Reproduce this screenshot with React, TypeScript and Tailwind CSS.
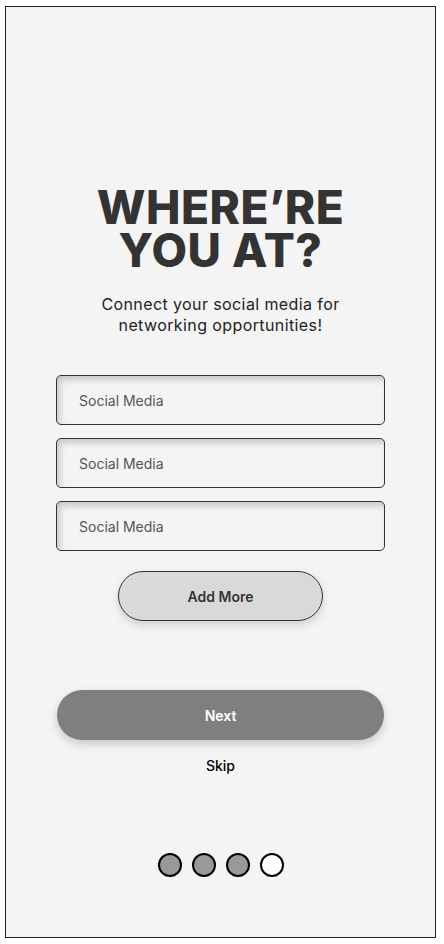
import React from "react";

const font = { fontFamily: "Inter, 'Noto Sans', sans-serif" };

export default function App() {
  return (
    <div className="min-h-screen bg-white pt-[6px] pl-[5px]" style={font}>
      <div className="w-[431px] h-[932px] border border-[#222] bg-[#f4f4f4] flex flex-col items-center">
        <h1 className="mt-[179px] text-[46px] leading-[43px] font-extrabold text-[#333] text-center tracking-[0.5px]">
          WHERE’RE
          <br />
          YOU AT?
        </h1>
        <p className="mt-[22px] text-[16px] leading-[21px] text-[#222] text-center tracking-[0.4px]">
          Connect your social media for
          <br />
          networking opportunities!
        </p>
        <div className="mt-[39px] flex flex-col gap-[13px]">
          {[0, 1, 2].map((i) => (
            <div
              key={i}
              className="w-[329px] h-[50px] rounded-[5px] border border-[#333] bg-[#f4f4f4] shadow-[inset_3px_4px_6px_rgba(0,0,0,0.18)] flex items-center pl-[22px] text-[14px] text-[#555]"
            >
              Social Media
            </div>
          ))}
        </div>
        <button className="mt-[20px] w-[205px] h-[50px] rounded-full border border-[#333] bg-[#d9d9d9] shadow-[0_4px_8px_rgba(0,0,0,0.15)] text-[14px] font-semibold text-[#333]">
          Add More
        </button>
        <button className="mt-[69px] w-[327px] h-[50px] rounded-full bg-[#7f7f7f] shadow-[0_4px_10px_rgba(0,0,0,0.18)] text-[14px] font-semibold text-white">
          Next
        </button>
        <div className="mt-[15px] text-[14px] text-black font-medium">Skip</div>
        <div className="mt-[77px] flex gap-[10px]">
          <span className="w-[24px] h-[24px] rounded-full border-2 border-black bg-[#999]" />
          <span className="w-[24px] h-[24px] rounded-full border-2 border-black bg-[#999]" />
          <span className="w-[24px] h-[24px] rounded-full border-2 border-black bg-[#999]" />
          <span className="w-[24px] h-[24px] rounded-full border-2 border-black bg-white" />
        </div>
      </div>
    </div>
  );
}
